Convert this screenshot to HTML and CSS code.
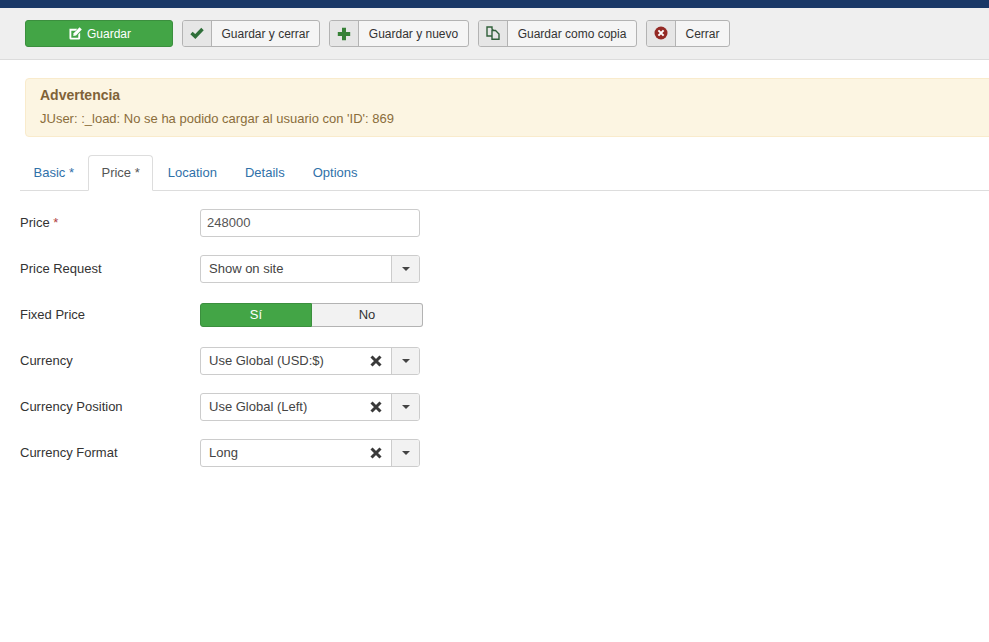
FILE: index.html
```html
<!DOCTYPE html>
<html lang="es">
<head>
<meta charset="utf-8">
<title>Price</title>
<link rel="stylesheet" href="styles.css">
</head>
<body>
<div class="topbar"></div>
<div class="toolbar">
  <button class="btn btn-save"><svg class="ico" viewBox="0 0 14 14" width="13" height="13"><path fill="#fff" d="M.5 2H9L7 4H2.5V11.5H10V8L12 6V12a1.5 1.5 0 0 1-1.5 1.5H2A1.5 1.5 0 0 1 .5 12Z"/><path fill="#fff" d="M11.4.4 13.8 2.8 7.6 9.2 4.6 9.6 5 6.6Z"/></svg>Guardar</button>
  <button class="btn w1"><span class="btn-ic"><svg viewBox="0 0 14 14" width="14" height="14"><path fill="none" stroke="#2f6f3a" stroke-width="3.4" d="M1.5 7 5.3 10.5 12.5 3"/></svg></span><span class="btn-tx">Guardar y cerrar</span></button>
  <button class="btn w2"><span class="btn-ic ic-plus"><svg viewBox="0 0 14 14" width="14" height="14"><path fill="#378137" d="M5 .8H9V5H13.2V9H9V13.2H5V9H.8V5H5Z"/></svg></span><span class="btn-tx">Guardar y nuevo</span></button>
  <button class="btn w3"><span class="btn-ic"><svg viewBox="0 0 14 14" width="14" height="14"><path fill="none" stroke="#30603a" stroke-width="1.4" d="M1 1H6V3L7 4V10H1Z"/><path fill="#e6e6e6" stroke="#30603a" stroke-width="1.4" d="M6 4.5H9.5L13 8V13.2H6Z"/></svg></span><span class="btn-tx">Guardar como copia</span></button>
  <button class="btn w4"><span class="btn-ic"><svg viewBox="0 0 14 14" width="14" height="14"><circle cx="7" cy="7" r="6.5" fill="#942a25"/><path stroke="#fff" stroke-width="2" d="M4.4 4.4 9.6 9.6M9.6 4.4 4.4 9.6"/></svg></span><span class="btn-tx">Cerrar</span></button>
</div>
<main class="content">
  <div class="alert">
    <h4 class="alert-h">Advertencia</h4>
    <p class="alert-p">JUser: :_load: No se ha podido cargar al usuario con 'ID': 869</p>
  </div>
  <ul class="tabs">
    <li class="tab">Basic *</li>
    <li class="tab active">Price *</li>
    <li class="tab">Location</li>
    <li class="tab">Details</li>
    <li class="tab">Options</li>
  </ul>
  <form class="form">
    <div class="row"><label class="lbl">Price <span class="req">*</span></label><input class="input" value="248000"></div>
    <div class="row"><label class="lbl">Price Request</label><div class="select"><span class="val">Show on site</span><span class="arrow"><i class="caret"></i></span></div></div>
    <div class="row"><label class="lbl">Fixed Price</label><div class="toggle"><span class="opt on">Sí</span><span class="opt off">No</span></div></div>
    <div class="row"><label class="lbl">Currency</label><div class="select"><span class="val">Use Global (USD:$)</span><svg class="x" viewBox="0 0 12 12" width="12" height="12"><path stroke="#3a3a3a" stroke-width="3" d="M1.5 1.5 10.5 10.5M10.5 1.5 1.5 10.5"/></svg><span class="arrow"><i class="caret"></i></span></div></div>
    <div class="row"><label class="lbl">Currency Position</label><div class="select"><span class="val">Use Global (Left)</span><svg class="x" viewBox="0 0 12 12" width="12" height="12"><path stroke="#3a3a3a" stroke-width="3" d="M1.5 1.5 10.5 10.5M10.5 1.5 1.5 10.5"/></svg><span class="arrow"><i class="caret"></i></span></div></div>
    <div class="row"><label class="lbl">Currency Format</label><div class="select"><span class="val">Long</span><svg class="x" viewBox="0 0 12 12" width="12" height="12"><path stroke="#3a3a3a" stroke-width="3" d="M1.5 1.5 10.5 10.5M10.5 1.5 1.5 10.5"/></svg><span class="arrow"><i class="caret"></i></span></div></div>
  </form>
</main>
</body>
</html>
```
FILE: styles.css
```css
* { box-sizing: border-box; }
html, body { margin: 0; height: 100%; }
body { font: 13px/18px "Liberation Sans", Arial, sans-serif; color: #333; background: #fff; overflow: hidden; }
.topbar { height: 8px; background: #1a3867; }
.toolbar { height: 52px; background: #efefef; border-bottom: 1px solid #dcdcdc; padding: 12px 25px 0; display: flex; gap: 9px; align-items: flex-start; }
.btn { height: 27px; padding: 0; margin: 0; display: flex; align-items: stretch; font: 12px/27px "Liberation Sans", Arial, sans-serif; color: #333; background: #f5f5f5; border: 1px solid #b3b3b3; border-radius: 3px; }
.btn-save { width: 148px; background: #43a546; border-color: #3b8f3e; color: #fff; justify-content: center; align-items: center; padding: 2px 0 0 2px; }
.ico { margin-right: 5px; margin-bottom: 3px; }
.btn-ic { width: 29px; background: #e6e6e6; border-right: 1px solid #b3b3b3; display: flex; align-items: center; justify-content: center; border-radius: 2px 0 0 2px; padding-bottom: 2px; }
.ic-plus { padding-bottom: 0; }
.btn-tx { flex: 1; text-align: center; }
.w1 { width: 138px; }
.w2 { width: 140px; }
.w3 { width: 159px; }
.w4 { width: 84px; }
.content { padding: 18px 0 0 20px; }
.alert { margin: 0 -10px 0 5px; height: 59px; padding: 8px 14px; background: #fcf5e2; border: 1px solid #f9ebcc; border-radius: 4px; color: #8a6d3b; }
.alert-h { margin: 0; font-size: 14px; line-height: 17px; font-weight: bold; color: #7f6238; }
.alert-p { margin: 6px 0 0; font-size: 13px; line-height: 18px; }
.tabs { list-style: none; margin: 18px 0 18px; padding: 0; display: flex; height: 36px; border-bottom: 1px solid #ddd; }
.tab { padding: 8px 13.5px 0 12.5px; height: 36px; color: #3071a9; border: 1px solid transparent; }
.tab.active { color: #555; background: #fff; border: 1px solid #ddd; border-bottom-color: #fff; border-radius: 4px 4px 0 0; padding-right: 12px; margin: 0 1.5px 0 -0.5px; }
.form { display: flex; flex-direction: column; gap: 18px; }
.row { display: flex; align-items: center; height: 28px; }
.lbl { width: 180px; }
.req { color: #b0413e; }
.input { width: 220px; height: 28px; padding: 0 6px 2px; font: 13px "Liberation Sans", Arial, sans-serif; color: #555; border: 1px solid #ccc; border-radius: 3px; }
.select { width: 220px; height: 28px; display: flex; align-items: center; border: 1px solid #ccc; border-radius: 3px; background: #fff; color: #444; }
.val { flex: 1; padding-left: 8px; }
.x { margin-right: 9px; }
.arrow { width: 28px; height: 100%; background: #f2f2f2; border-left: 1px solid #ccc; display: flex; align-items: center; justify-content: center; border-radius: 0 2px 2px 0; }
.caret { width: 0; height: 0; border: 4px solid transparent; border-top-color: #444; border-bottom: 0; }
.toggle { display: flex; width: 223px; height: 24px; line-height: 22px; text-align: center; }
.opt { border: 1px solid #b3b3b3; }
.on { width: 112px; background: #43a546; border-color: #3b8f3e; color: #fff; border-radius: 3px 0 0 3px; }
.off { flex: 1; background: #f2f2f2; border-left: 0; border-radius: 0 3px 3px 0; }
```
